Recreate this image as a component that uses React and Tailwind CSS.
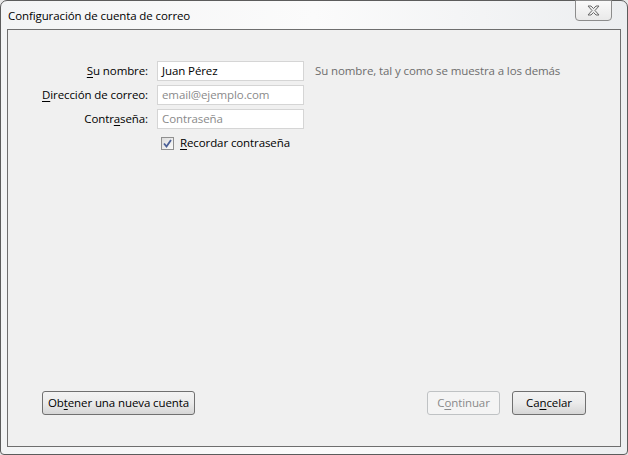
import React from "react";

const font = { fontFamily: '"Open Sans", "Noto Sans", sans-serif' };

const Key = ({ children }) => <span className="underline underline-offset-2">{children}</span>;

const Field = ({ label, value, placeholder }) => (
  <div className="flex items-center h-[20px]">
    <label className="w-[140px] text-right text-black">{label}</label>
    <div className="ml-[9px] w-[147px] h-[20px] bg-white border border-[#d5d5d5] flex items-center px-[4px]">
      {value ? (
        <span className="text-black">{value}</span>
      ) : (
        <span className="text-[#8a8a8a]">{placeholder}</span>
      )}
    </div>
  </div>
);

const Btn = ({ children, disabled, className }) => (
  <button
    className={
      "h-[24px] rounded-[3px] border text-[11.5px] tracking-[-0.1px] leading-none flex items-center justify-center " +
      (disabled
        ? "border-[#bfc2c4] bg-[#f4f4f4] text-[#8a8a8a] "
        : "border-[#707070] bg-gradient-to-b from-[#f3f3f3] via-[#ebebeb] to-[#d6d6d6] text-black ") +
      className
    }
  >
    {children}
  </button>
);

export default function App() {
  return (
    <div className="w-[628px] h-[455px] bg-[#e8e8e8] overflow-hidden" style={font}>
      <div className="relative w-full h-full border border-[#5c5c5c] rounded-tl-[7px] rounded-tr-[7px] rounded-b-[4px] bg-gradient-to-r from-[#f3f4f5] via-[#fbfbfb] to-[#eceef0] flex flex-col text-[11.5px] tracking-[-0.1px] leading-none">
        {/* Title bar */}
        <div className="h-[28px] flex items-center pl-[7px] pt-[2px] text-black">
          Configuración de cuenta de correo
        </div>
        <div className="absolute right-[15px] top-[-1px] w-[37px] h-[21px] border border-[#8c8c8c] rounded-b-[4px] bg-gradient-to-b from-[#fafafa] to-[#e9e9e9] flex items-center justify-center">
          <svg width="13" height="11" viewBox="0 0 13 11">
            <path
              d="M1 1 H4 L6.5 3.5 L9 1 H12 L8 5.5 L12 10 H9 L6.5 7.5 L4 10 H1 L5 5.5 Z"
              fill="#ececec"
              stroke="#6a6a6a"
              strokeWidth="1"
              strokeLinejoin="round"
            />
          </svg>
        </div>

        {/* Client area */}
        <div className="mx-[6px] mb-[7px] flex-1 border border-[#6e6e6e] bg-[#f0f0f0] flex flex-col">
          <div className="pt-[31px] flex flex-col gap-[4px]">
            <div className="flex items-center">
              <Field label={<><Key>S</Key>u nombre:</>} value="Juan Pérez" />
              <span className="ml-[11px] text-[#6d6d6d]">Su nombre, tal y como se muestra a los demás</span>
            </div>
            <Field label={<><Key>D</Key>irección de correo:</>} placeholder="email@ejemplo.com" />
            <Field label={<>Contr<Key>a</Key>seña:</>} placeholder="Contraseña" />
            <div className="flex items-center h-[20px] pl-[153px]">
              <div className="w-[13px] h-[13px] border border-[#8f8f8f] bg-gradient-to-br from-[#dcdcdc] to-[#fbfbfb] flex items-center justify-center">
                <svg width="9" height="9" viewBox="0 0 9 9">
                  <path d="M1 4.5 L3.5 7.5 L8 1" fill="none" stroke="#4a5f97" strokeWidth="1.8" />
                </svg>
              </div>
              <span className="ml-[6px] text-black">
                <Key>R</Key>ecordar contraseña
              </span>
            </div>
          </div>

          <div className="flex-1" />

          <div className="flex items-center pl-[34px] pr-[34px] pb-[31px]">
            <Btn className="w-[153px]">
              Ob<Key>t</Key>ener una nueva cuenta
            </Btn>
            <div className="flex-1" />
            <Btn disabled className="w-[73px]">
              C<Key>o</Key>ntinuar
            </Btn>
            <Btn className="w-[74px] ml-[12px]">
              Ca<Key>n</Key>celar
            </Btn>
          </div>
        </div>
      </div>
    </div>
  );
}
